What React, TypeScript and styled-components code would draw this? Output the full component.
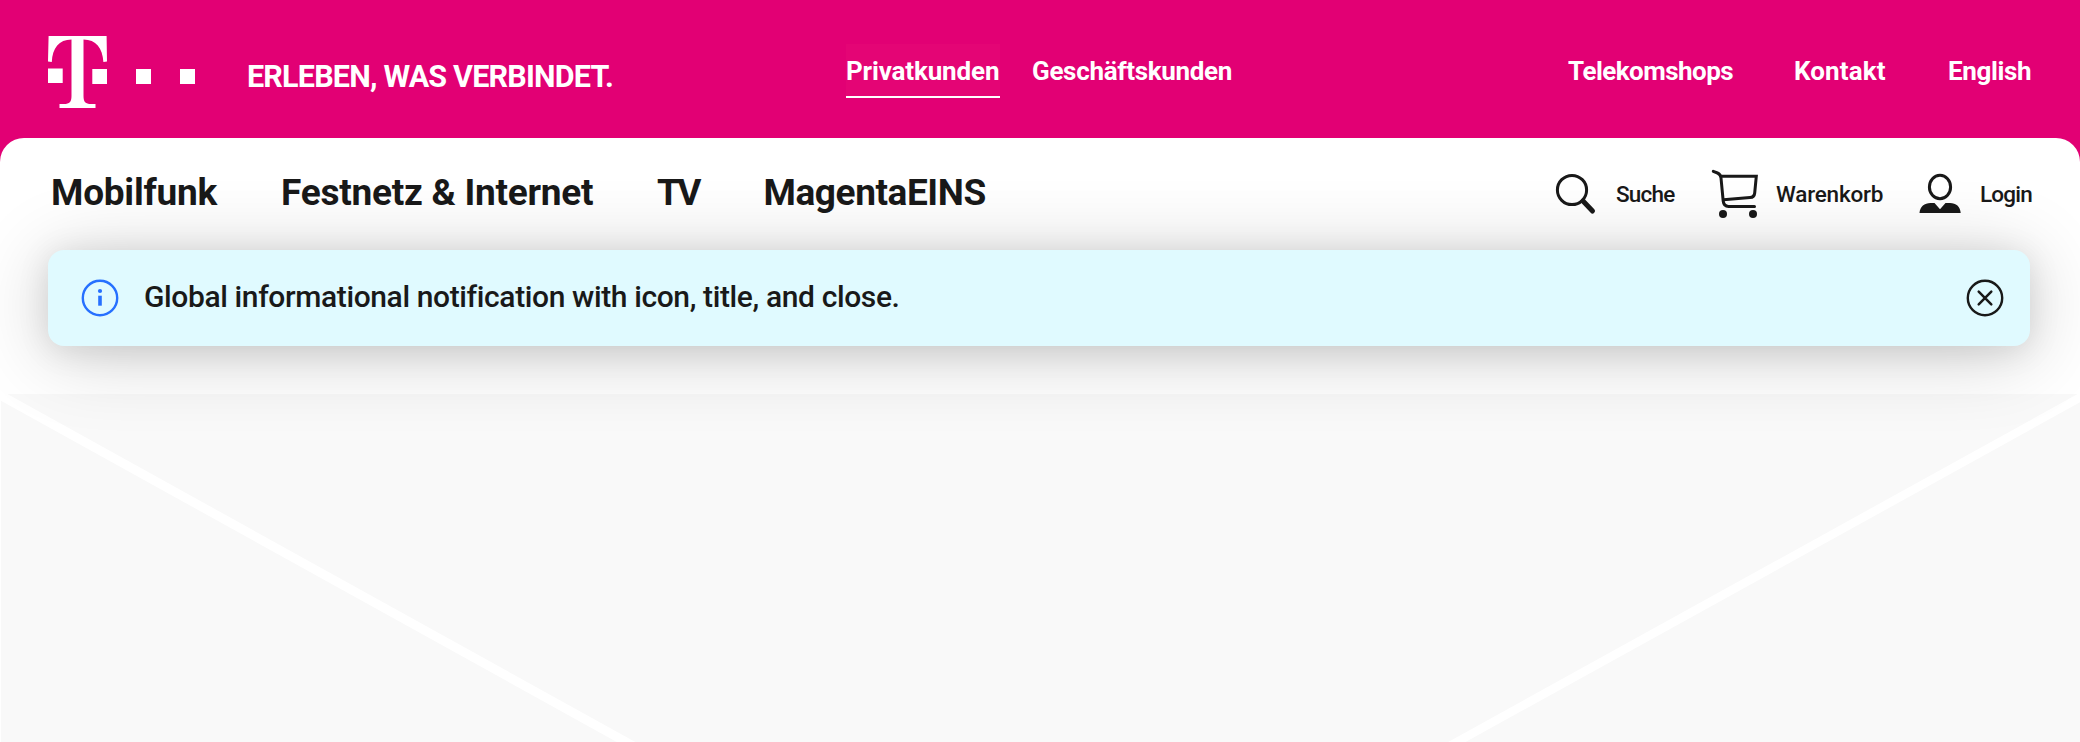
import React from 'react';
import styled, { createGlobalStyle } from 'styled-components';

const GlobalStyle = createGlobalStyle`
  * { box-sizing: border-box; }
  body { margin: 0; background: #fff; color: #191919; font-family: Roboto, "Liberation Sans", sans-serif; }
`;

const Page = styled.div`
  height: 742px;
  overflow: hidden;
  display: flex;
  flex-direction: column;
  background: #e20074;
`;

const TopBar = styled.header`
  flex: none;
  height: 138px;
  display: flex;
  align-items: flex-start;
  padding: 36px 0 0 48px;
  color: #fff;
`;

const Label = styled.span<{ $size: number; $weight?: number; $track?: number; $width?: number }>`
  display: block;
  flex: none;
  white-space: nowrap;
  font-size: ${(p) => p.$size}px;
  font-weight: ${(p) => p.$weight ?? 700};
  letter-spacing: ${(p) => p.$track ?? 0}px;
  width: ${(p) => (p.$width ? `${p.$width}px` : 'auto')};
  line-height: 40px;
`;

const Logo = styled.svg`
  flex: none;
  display: block;
  width: 148px;
  height: 72px;
`;

const Slogan = styled.div`
  margin: 21px 0 0 51px;
  width: 599px;
`;

const Segments = styled.nav`
  display: flex;
  gap: 32px;
  margin-top: 8px;
  width: 722px;
`;

const Segment = styled.a<{ $active?: boolean }>`
  height: 54px;
  padding-top: 7px;
  background: ${(p) => (p.$active ? '#e40575' : 'transparent')};
  border-bottom: 2px solid ${(p) => (p.$active ? '#fff' : 'transparent')};
`;

const MetaLinks = styled.nav`
  display: flex;
  margin-top: 15px;
`;

const Sheet = styled.div`
  flex: 1;
  display: flex;
  flex-direction: column;
  background: #fff;
  border-radius: 24px 24px 0 0;
`;

const NavBar = styled.div`
  height: 112px;
  display: flex;
  padding: 35px 0 0 51px;
`;

const MainNav = styled.nav`
  flex: none;
  display: flex;
  width: 1503px;
`;

const Actions = styled.div`
  display: flex;
  align-items: flex-start;
`;

const Action = styled.a<{ $gap: number; $width?: number }>`
  flex: none;
  display: flex;
  gap: ${(p) => p.$gap}px;
  width: ${(p) => (p.$width ? `${p.$width}px` : 'auto')};
  padding-top: 1px;
`;

const ActionIcon = styled.svg`
  flex: none;
  display: block;
  width: 52px;
  height: 52px;
  margin-top: -6px;
`;

const Notification = styled.div`
  position: relative;
  z-index: 1;
  flex: none;
  height: 96px;
  margin: 0 50px 0 48px;
  padding: 0 26px 0 33px;
  display: flex;
  align-items: center;
  background: #e0faff;
  border-radius: 16px;
  box-shadow: 0 4px 32px rgba(0, 0, 0, 0.1), 0 8px 80px rgba(0, 0, 0, 0.2);
`;

const RoundIcon = styled.svg`
  flex: none;
  display: block;
  width: 38px;
  height: 38px;
`;

const Message = styled.div`
  flex: 1;
  padding: 0 0 2px 25px;
`;

const Placeholder = styled.div`
  flex: 1;
  margin: 48px 0 0 1px;
  background: #f9f9f9;
`;

const Cross = styled.svg`
  display: block;
`;

export default function App() {
  return (
    <>
      <GlobalStyle />
      <Page>
        <TopBar>
          <Logo viewBox="0 0 148 72" fill="#fff">
            <path d="M.6 0H58.600L59 25.500L55.400 26C54.500 12 48 3.500 35.500 3.500V60C35.500 66 37.500 68 43 68H47.500V72H11.500V68H16C21.500 68 23.500 66 23.500 60V3.500C11 3.500 4.500 12 3.800 26L0 25.500Z" />
            <path d="M0 32.500H14.700V47H0ZM44.300 33H59V48H44.300ZM88 33H103V48H88ZM132 33H147V48H132Z" />
          </Logo>
          <Slogan>
            <Label $size={30.5} $track={-0.8}>ERLEBEN, WAS VERBINDET.</Label>
          </Slogan>
          <Segments>
            <Segment $active>
              <Label $size={26} $track={-0.15} $width={154}>Privatkunden</Label>
            </Segment>
            <Segment>
              <Label $size={26} $track={-0.32}>Geschäftskunden</Label>
            </Segment>
          </Segments>
          <MetaLinks>
            <Label $size={26} $track={-0.54} $width={226}>Telekomshops</Label>
            <Label $size={26} $track={0.1} $width={154}>Kontakt</Label>
            <Label $size={26} $track={-0.35}>English</Label>
          </MetaLinks>
        </TopBar>
        <Sheet>
          <NavBar>
            <MainNav>
              <Label $size={37} $track={-0.25} $width={230}>Mobilfunk</Label>
              <Label $size={37} $track={-0.25} $width={376}>Festnetz &amp; Internet</Label>
              <Label $size={37} $track={-3} $width={106.5}>TV</Label>
              <Label $size={37} $track={-0.42}>MagentaEINS</Label>
            </MainNav>
            <Actions>
              <Action $gap={10} $width={152}>
                <ActionIcon viewBox="1554 168 52 52" fill="none" stroke="#191919">
                  <circle cx="1572" cy="190" r="14.600" strokeWidth="3" />
                  <path d="M1583 201L1592.500 211" strokeWidth="5" strokeLinecap="round" />
                </ActionIcon>
                <Label $size={22.5} $weight={500} $track={-0.8}>Suche</Label>
              </Action>
              <Action $gap={18} $width={207}>
                <ActionIcon viewBox="1706 168 52 52" fill="none" stroke="#191919" strokeWidth="3">
                  <path d="M1713.300 171.400L1717.500 173Q1720.700 174.300 1721 178L1723.200 201Q1723.800 206.400 1728.500 206.400H1754.500" strokeLinecap="round" />
                  <path d="M1721 176.300H1756.300L1754.700 193Q1754.300 197.200 1750 197.600L1723.500 199.700" />
                  <circle cx="1723" cy="214" r="4" fill="#191919" stroke="none" />
                  <circle cx="1753" cy="214" r="4" fill="#191919" stroke="none" />
                </ActionIcon>
                <Label $size={22.5} $weight={500} $track={-0.2}>Warenkorb</Label>
              </Action>
              <Action $gap={15}>
                <ActionIcon viewBox="1913 168 52 52">
                  <ellipse cx="1940" cy="187" rx="10.600" ry="11.700" fill="none" stroke="#191919" strokeWidth="3" />
                  <path d="M1919.500 213C1920 206.500 1924.500 203 1930.500 203H1934.500L1940 209.200L1945.500 203H1950C1956 203 1960.300 206.500 1960.700 213Z" fill="#191919" />
                </ActionIcon>
                <Label $size={22.5} $weight={500} $track={-0.8}>Login</Label>
              </Action>
            </Actions>
          </NavBar>
          <Notification>
            <RoundIcon viewBox="0 0 38 38" fill="none" stroke="#2670ff">
              <circle cx="19" cy="19" r="17.200" strokeWidth="2.400" />
              <path d="M19 16.700V26.700" strokeWidth="3.600" />
              <circle cx="19" cy="12" r="2.100" fill="#2670ff" stroke="none" />
            </RoundIcon>
            <Message>
              <Label $size={30} $weight={500} $track={-0.38}>Global informational notification with icon, title, and close.</Label>
            </Message>
            <RoundIcon viewBox="0 0 38 38" fill="none" stroke="#191919">
              <circle cx="19" cy="19" r="17.200" strokeWidth="2.400" />
              <path d="M12.700 12.700L25.300 25.300M25.300 12.700L12.700 25.300" strokeWidth="2.500" strokeLinecap="round" />
            </RoundIcon>
          </Notification>
          <Placeholder>
            <Cross width="2079" height="348" viewBox="1 394 2079 348" stroke="#fff">
              <path d="M-10 389.500L645 752.500" strokeWidth="9" />
              <path d="M2090 392L1437 753" strokeWidth="8.400" />
            </Cross>
          </Placeholder>
        </Sheet>
      </Page>
    </>
  );
}
